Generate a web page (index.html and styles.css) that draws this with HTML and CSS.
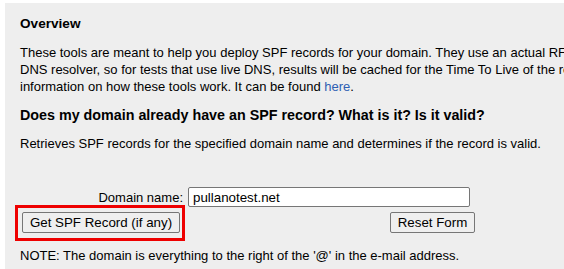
FILE: index.html
```html
<!DOCTYPE html>
<html>
<head>
<meta charset="utf-8">
<link rel="stylesheet" href="styles.css">
</head>
<body>
<div class="panel">
  <h2 class="title">Overview</h2>
  <p class="text">These tools are meant to help you deploy SPF records for your domain. They use an actual RFC-compliant<br>DNS resolver, so for tests that use live DNS, results will be cached for the Time To Live of the record. For more<br>information on how these tools work. It can be found <a class="link" href="#">here</a>.</p>
  <h3 class="subtitle">Does my domain already have an SPF record? What is it? Is it valid?</h3>
  <p class="text desc">Retrieves SPF records for the specified domain name and determines if the record is valid.</p>
  <form class="form">
    <label class="label" for="domain">Domain name:</label>
    <input class="field" id="domain" type="text" value="pullanotest.net">
    <span class="highlight"><button class="btn" type="button">Get SPF Record (if any)</button></span>
    <button class="btn reset" type="reset">Reset Form</button>
  </form>
  <p class="text note">NOTE: The domain is everything to the right of the '@' in the e-mail address.</p>
</div>
</body>
</html>
```

FILE: styles.css
```css
html, body {
  margin: 0;
  padding: 0;
  background: #ffffff;
  overflow: hidden;
}
body {
  font-family: "Liberation Sans", Arial, sans-serif;
  font-size: 13px;
  color: #000;
}
.panel {
  margin: 3px 0 0 5px;
  width: 700px;
  height: 266px;
  background: #eeeeee;
  padding: 13px 0 0 15px;
  box-sizing: border-box;
  overflow: hidden;
}
.title {
  margin: 0;
  font-size: 13.6px;
  font-weight: bold;
  line-height: 16px;
}
.text {
  margin: 12px 0 0;
  line-height: 17px;
  white-space: nowrap;
}
.link {
  color: #2f5fb3;
  text-decoration: none;
}
.subtitle {
  margin: 11px 0 0;
  font-size: 14.3px;
  font-weight: bold;
  line-height: 18px;
}
.desc {
  margin-top: 11px;
}
.form {
  display: grid;
  grid-template-columns: 170px 290px;
  margin: 35px 0 0 -5px;
}
.label {
  display: flex;
  align-items: center;
  justify-content: flex-end;
  padding-right: 2px;
  line-height: 17px;
}
.field {
  margin: 0 0 0 3px;
  width: 282px;
  height: 20px;
  box-sizing: border-box;
  border: 1px solid #767676;
  border-radius: 2px;
  padding: 0 4px;
  font-family: "Liberation Sans", Arial, sans-serif;
  font-size: 13.33px;
  color: #000;
  background: #fff;
}
.highlight {
  justify-self: start;
  margin-top: -2px;
  border: 3px solid #ee0000;
  padding: 4px 2px 5px 4px;
  display: flex;
}
.btn {
  height: 21px;
  width: 158px;
  box-sizing: border-box;
  border: 1px solid #767676;
  border-radius: 2px;
  background: #efefef;
  font-family: "Liberation Sans", Arial, sans-serif;
  font-size: 13.33px;
  color: #000;
  padding: 0 6px;
  margin: 0;
}
.reset {
  width: 85px;
  justify-self: end;
  align-self: start;
  margin-top: 5px;
}
.note {
  margin-top: 6px;
}
```
